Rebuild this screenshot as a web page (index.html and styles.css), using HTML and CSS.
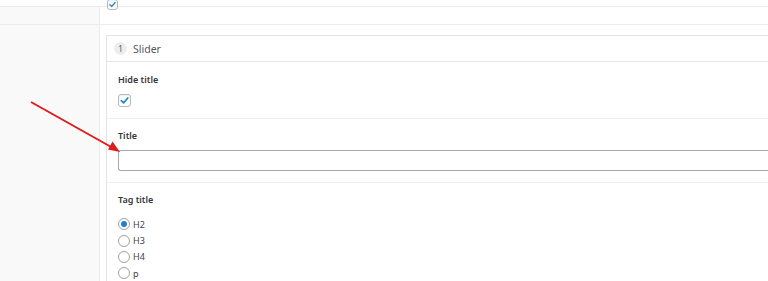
FILE: index.html
```html
<!DOCTYPE html>
<html>
<head>
<meta charset="utf-8">
<link rel="stylesheet" href="styles.css">
</head>
<body>
<div class="page">
  <div class="row row-top"></div>
  <div class="row row-check">
    <div class="th"></div>
    <div class="td"><span class="cb cb-top"><svg viewBox="0 0 12 12"><path d="M2.5 6.2 L5 8.6 L9.6 3.2" /></svg></span></div>
  </div>
  <div class="row row-main">
    <div class="th"></div>
    <div class="td">
      <div class="card">
        <div class="card-head"><span class="num">1</span><span class="card-title">Slider</span></div>
        <div class="section">
          <div class="label">Hide title</div>
          <span class="cb"><svg viewBox="0 0 12 12"><path d="M2.5 6.2 L5 8.6 L9.6 3.2" /></svg></span>
        </div>
        <div class="section">
          <div class="label">Title</div>
          <div class="input"></div>
        </div>
        <div class="section last">
          <div class="label">Tag title</div>
          <div class="radios">
            <div class="radio-row"><span class="radio checked"></span><span>H2</span></div>
            <div class="radio-row"><span class="radio"></span><span>H3</span></div>
            <div class="radio-row"><span class="radio"></span><span>H4</span></div>
            <div class="radio-row"><span class="radio"></span><span>p</span></div>
          </div>
        </div>
      </div>
    </div>
  </div>
  <svg class="arrow" width="768" height="281" viewBox="0 0 768 281">
    <line x1="31" y1="102" x2="113" y2="148" />
    <polygon points="120,152 108,149.5 112.5,141.5" />
  </svg>
</div>
</body>
</html>
```

FILE: styles.css
```css
html, body {
  margin: 0;
  padding: 0;
  background: #ffffff;
  overflow: hidden;
}
body {
  font-family: "Noto Sans", "Open Sans", sans-serif;
  color: #23282d;
}
.page {
  position: relative;
  width: 768px;
  height: 281px;
  overflow: hidden;
}
.row {
  display: flex;
  border-bottom: 1px solid #ececec;
}
.row-top {
  height: 6px;
  background: #ffffff;
}
.row-check {
  height: 17px;
}
.row-main {
  border-bottom: none;
  height: 256px;
}
.th {
  width: 99px;
  flex: none;
  background: #f9f9f9;
  border-right: 1px solid #ececec;
}
.td {
  flex: 1;
  background: #ffffff;
  min-width: 0;
}
.row-check .td {
  padding-left: 7px;
}
.cb {
  display: block;
  box-sizing: border-box;
  width: 13px;
  height: 13px;
  border: 1px solid #b4b9be;
  border-radius: 3px;
  background: #fff;
  box-shadow: inset 0 1px 2px rgba(0,0,0,0.08);
}
.cb svg {
  display: block;
  width: 11px;
  height: 11px;
}
.cb svg path {
  fill: none;
  stroke: #1e8cbe;
  stroke-width: 1.8;
  stroke-linecap: round;
  stroke-linejoin: round;
}
.cb-top {
  width: 11px;
  height: 11px;
  margin-top: -8px;
  position: relative;
}
.cb-top svg {
  width: 9px;
  height: 9px;
}
.row-main .td {
  padding: 10px 0 0 6px;
}
.card {
  border: 1px solid #e2e4e7;
  border-right: none;
  background: #fff;
  height: 300px;
}
.card-head {
  height: 25px;
  display: flex;
  align-items: center;
  padding-left: 7px;
  border-bottom: 1px solid #e2e4e7;
}
.num {
  width: 13px;
  height: 13px;
  border-radius: 50%;
  background: #ededed;
  color: #555;
  font-size: 8px;
  display: flex;
  align-items: center;
  justify-content: center;
  margin-right: 6px;
}
.card-title {
  font-size: 10.5px;
  color: #50575e;
}
.section {
  padding: 11px 0 11px 11px;
  border-bottom: 1px solid #eeeeee;
}
.section + .section {
  padding-top: 10px;
}
.section.last {
  border-bottom: none;
}
.label {
  font-size: 9px;
  font-weight: 600;
  line-height: 14px;
  height: 14px;
  color: #32373c;
  margin-bottom: 7px;
}
.input {
  box-sizing: border-box;
  height: 21px;
  border: 1px solid #a7aaad;
  border-right: none;
  border-radius: 3px 0 0 3px;
  background: #fff;
}
.radios {
  margin-top: 9px;
}
.radio-row {
  display: flex;
  align-items: center;
  height: 16.4px;
  font-size: 9px;
  color: #3c434a;
}
.radio {
  box-sizing: border-box;
  width: 12px;
  height: 12px;
  border: 1px solid #9ea3a8;
  border-radius: 50%;
  margin-right: 3px;
  background: #fff;
  display: flex;
  align-items: center;
  justify-content: center;
}
.radio.checked::after {
  content: "";
  width: 6px;
  height: 6px;
  border-radius: 50%;
  background: #1e7fd0;
}
.section.last .label {
  margin-bottom: 0;
}
.arrow {
  position: absolute;
  left: 0;
  top: 0;
  pointer-events: none;
}
.arrow line {
  stroke: #e01b1b;
  stroke-width: 2;
}
.arrow polygon {
  fill: #e01b1b;
}
```
